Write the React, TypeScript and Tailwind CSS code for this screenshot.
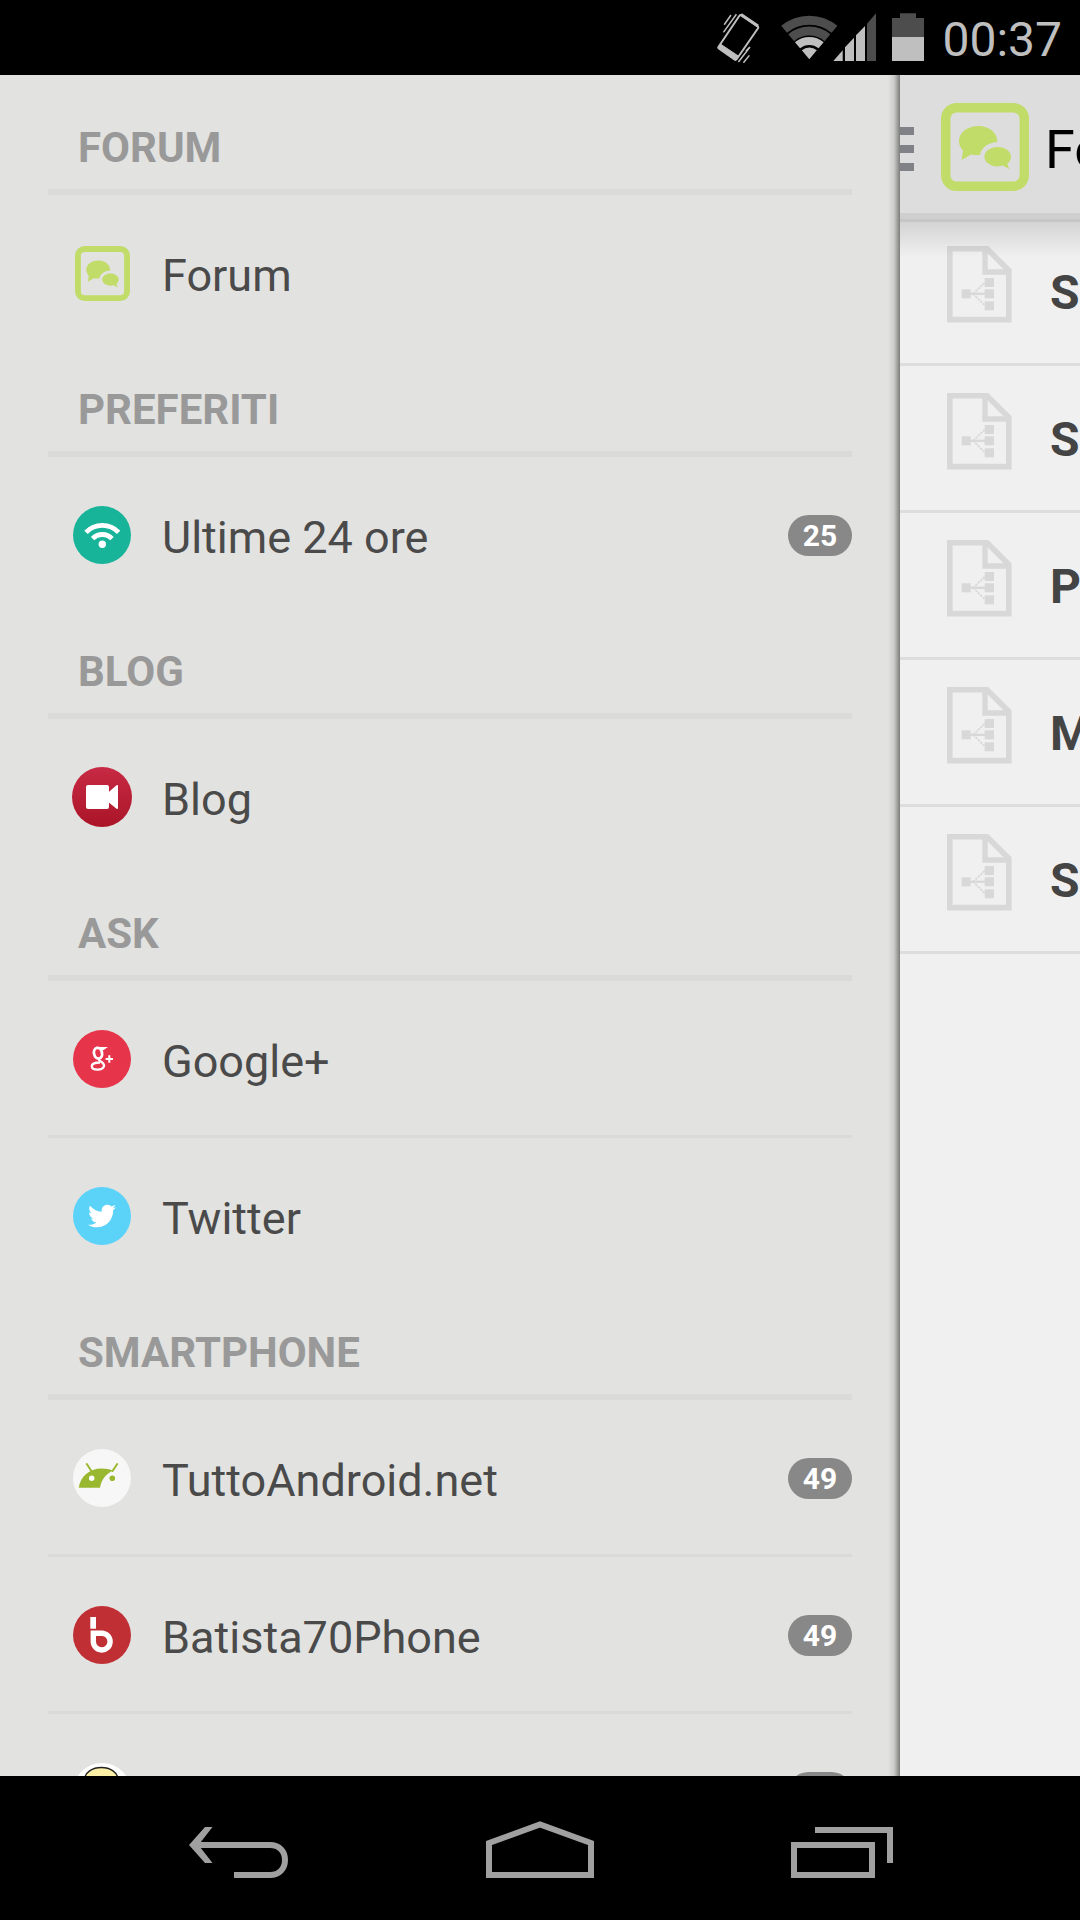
import React from 'react';
import { FaTwitter } from 'react-icons/fa';

type Item = {
    label: string;
    icon: React.ReactNode;
    count?: number;
};

type Section = {
    title: string;
    items: Item[];
};

const IconForum = ({ className }: { className: string }) => (
    <svg viewBox="0 0 88 88" className={className} aria-hidden="true">
        <rect x="4.7" y="4.7" width="78.6" height="78.6" rx="11" fill="none" stroke="#c1dc68" strokeWidth="9.4" />
        <path
            d="M37.5 23C48 23 56.3 29.5 56.3 38.5V39C47 39.5 40 45 39 52C35 52.3 32 52 30 51.5L20.7 57L22 47.5C19.5 45 18 41.5 18 37.7C18 29.5 26.5 23 37.5 23Z"
            fill="#c1dc68"
        />
        <path
            d="M56.7 44C64 44 70 48.3 70 53.7C70 56.5 68.6 59 66.3 60.7L68.3 66.3L62 62.6C60.4 63.1 58.6 63.4 56.7 63.4C49.4 63.4 43.4 59 43.4 53.7C43.4 48.3 49.4 44 56.7 44Z"
            fill="#c1dc68"
        />
    </svg>
);

const IconFeed = () => (
    <svg viewBox="0 0 60 60" className="size-[60px]" aria-hidden="true">
        <circle cx="30" cy="30" r="29" fill="#17b499" />
        <circle cx="30.3" cy="39.3" r="3.7" fill="#fff" />
        <g fill="none" stroke="#fff" strokeWidth="4.8">
            <path d="M20.6 33.6A13.5 13.5 0 0 1 40 33.6" />
            <path d="M14 27.4A22.5 22.5 0 0 1 46.6 27.4" />
        </g>
    </svg>
);

const IconVideo = () => (
    <svg viewBox="0 0 60 60" className="size-[60px]" aria-hidden="true">
        <defs>
            <linearGradient id="video-bg" x1="0" y1="0" x2="0" y2="1">
                <stop offset="0" stopColor="#c72a44" />
                <stop offset="1" stopColor="#ab1528" />
            </linearGradient>
        </defs>
        <circle cx="30" cy="30" r="30" fill="url(#video-bg)" />
        <rect x="14" y="18" width="23" height="24" rx="2" fill="#fff" />
        <path d="M36.5 25.3L44.5 18.3Q46 17.6 46 19V41Q46 42.4 44.5 41.7L36.5 35.3Z" fill="#fff" />
    </svg>
);

const IconGooglePlus = () => (
    <svg viewBox="0 0 60 60" className="size-[60px]" aria-hidden="true">
        <circle cx="30" cy="30" r="29" fill="#e6344b" />
        <g fill="none" stroke="#fff">
            <ellipse cx="26" cy="24.2" rx="4" ry="5.4" strokeWidth="2.8" transform="rotate(-12 26 24.2)" />
            <path d="M25 18.8H33.2L31 20.4H28.4" strokeWidth="1.8" />
            <path d="M27.6 29.4C25.2 31 28.6 32 30.6 33.8C33.6 36.6 31.6 40.6 25.8 40.6C22 40.6 19.8 39 19.8 37.2C19.8 34.6 23 33.5 28 33.5" strokeWidth="2.3" />
            <path d="M33.6 30H41M37.3 26.3V33.7" strokeWidth="2" />
        </g>
    </svg>
);

const IconTwitter = () => (
    <span className="flex size-[58px] items-center justify-center rounded-full bg-[#5bd3f8]">
        <FaTwitter className="size-7 text-white" aria-hidden="true" />
    </span>
);

const IconTuttoAndroid = () => (
    <svg viewBox="0 0 60 60" className="size-[60px]" aria-hidden="true">
        <circle cx="30" cy="30" r="29" fill="#f7f7f7" />
        <path d="M6.7 39.8C8.5 28.5 17 20.4 29.7 20.4C34 20.4 38 21.2 41 22.6C33.5 26.5 29.5 31.5 28 39.8Z" fill="#9ab82f" />
        <path d="M14.8 16L20 24M45.2 16L40.5 23" stroke="#9ab82f" strokeWidth="2" strokeLinecap="round" />
        <circle cx="19.7" cy="30.3" r="2.7" fill="#fff" />
        <circle cx="40.3" cy="30.3" r="2.8" fill="#9ab82f" />
    </svg>
);

const IconBatista = () => (
    <svg viewBox="0 0 60 60" className="size-[60px]" aria-hidden="true">
        <circle cx="30" cy="30" r="29" fill="#c02f33" />
        <rect x="18.3" y="12" width="5.7" height="11.7" fill="#fff" />
        <path d="M21.3 28.2H30.4A8.4 8.4 0 1 1 21.3 36.6Z" fill="none" stroke="#fff" strokeWidth="5.4" />
    </svg>
);

const IconMister = () => (
    <svg viewBox="0 0 60 60" className="size-[60px]" aria-hidden="true">
        <circle cx="30" cy="30" r="29" fill="#fff" />
        <ellipse cx="29.3" cy="17" rx="16.5" ry="11.5" fill="#fbf0a6" stroke="#222" strokeWidth="1.4" />
    </svg>
);

const IconTopic = () => (
    <svg viewBox="0 0 65 77" className="h-[77px] w-[65px] shrink-0" fill="none" stroke="#d8d8d8" aria-hidden="true">
        <path d="M2.8 2.8H40L61.8 24.5V73.6H2.8Z" strokeWidth="5.6" />
        <path d="M38 3V26H62" strokeWidth="5.4" />
        <path d="M23 47.8H38" strokeWidth="2.4" />
        <path d="M26 47.8L38 36.5M26 47.8L38 59.5" strokeWidth="1.8" strokeDasharray="2.4 1" />
        <g fill="#d8d8d8" stroke="none">
            <rect x="14.7" y="43.3" width="9" height="9" />
            <rect x="37.7" y="32" width="9.3" height="9" />
            <rect x="37.7" y="43.3" width="9.3" height="9" />
            <rect x="37.7" y="55.3" width="9.3" height="9" />
        </g>
    </svg>
);

const sections: Section[] = [
    {
        title: 'FORUM',
        items: [{ label: 'Forum', icon: <IconForum className="size-[55px]" /> }],
    },
    {
        title: 'PREFERITI',
        items: [{ label: 'Ultime 24 ore', icon: <IconFeed />, count: 25 }],
    },
    {
        title: 'BLOG',
        items: [{ label: 'Blog', icon: <IconVideo /> }],
    },
    {
        title: 'ASK',
        items: [
            { label: 'Google+', icon: <IconGooglePlus /> },
            { label: 'Twitter', icon: <IconTwitter /> },
        ],
    },
    {
        title: 'SMARTPHONE',
        items: [
            { label: 'TuttoAndroid.net', icon: <IconTuttoAndroid />, count: 49 },
            { label: 'Batista70Phone', icon: <IconBatista />, count: 49 },
            { label: 'Mister Gadget', icon: <IconMister />, count: 49 },
        ],
    },
];

const topics = ['S', 'S', 'P', 'M', 'S'];

const StatusBar = () => (
    <header className="flex h-[75px] shrink-0 items-center justify-end bg-black pr-[18px] text-[#bfbfbf]">
        {/* Vibrate mode */}
        <svg viewBox="0 0 43 50" className="h-[50px] w-[43px]" fill="none" stroke="currentColor" aria-hidden="true">
            <path d="M24 2.2L40.6 13.4Q41.6 14.2 41 15.2L19.6 46.2Q18.8 47.2 17.8 46.6L1.8 35.4Q1 34.8 1.6 33.8L22.4 2.8Q23.2 1.8 24 2.2Z" strokeWidth="2" />
            <path d="M24 1.6L41 13" strokeWidth="3" />
            <path d="M3.4 31L21.6 43.2L18.6 47.4L1 35Z" fill="currentColor" strokeWidth="1" />
            <path d="M7.2 11.8L14 2M6.4 19.4L19.4 1.2M33 34L21.4 49M32.4 42.4L26.4 49.8M32.6 34.2L29 38" strokeWidth="1.5" />
        </svg>

        {/* Wifi and signal strength */}
        <svg viewBox="0 0 96 50" className="ml-5 h-[50px] w-[96px]" fill="none" aria-hidden="true">
            <path d="M4.1 16.3A39.2 39.2 0 0 1 54.5 16.3" stroke="#4d4d4d" strokeWidth="9" />
            <path d="M11.2 24.7A28.2 28.2 0 0 1 47.4 24.7" stroke="#4d4d4d" strokeWidth="9" />
            <path d="M17.5 32.3A18.3 18.3 0 0 1 41.1 32.3" stroke="#bfbfbf" strokeWidth="8" />
            <path d="M29.3 46.3L21.8 37.3A11.7 11.7 0 0 1 36.8 37.3Z" fill="#bfbfbf" />
            <path d="M53.3 48H62.7V37.3ZM65 48H74V24.7L65 34.3ZM76 48H85V13L76 22.3Z" fill="#bfbfbf" />
            <path d="M87 48H96V0.3L87 10.7Z" fill="#4d4d4d" />
        </svg>

        {/* Battery */}
        <svg viewBox="0 0 32 50" className="ml-4 h-[50px] w-8" aria-hidden="true">
            <path d="M0 24V5H8V0.3H24V5H32V24Z" fill="#4d4d4d" />
            <rect y="24" width="32" height="24" fill="#bfbfbf" />
        </svg>

        <time className="ml-[18px] pt-1 text-[48px] leading-none">00:37</time>
    </header>
);

const DrawerItem = ({ label, icon, count }: Item) => (
    <li className="border-b-[3px] border-[#dadad8] last:border-b-0">
        <a href="#" className="flex h-[154px] items-center pt-[2px] pl-6">
            <span className="flex w-[60px] shrink-0 justify-center">{icon}</span>
            <span className="ml-[30px] flex-1 truncate pt-[6px] text-[45px] leading-[60px] text-[#4a4a4a]">{label}</span>
            {count !== undefined && (
                <span className="flex h-[41px] w-16 items-center justify-center rounded-full bg-[#888888] pt-[2px] text-[30px] leading-none font-bold text-white">
                    {count}
                </span>
            )}
        </a>
    </li>
);

const Drawer = () => (
    <nav className="relative w-5/6 shrink-0 overflow-hidden bg-[#e2e2e0] px-12 pt-3">
        {sections.map((section) => (
            <section key={section.title}>
                <h2 className="flex h-[108px] items-center border-b-6 border-[#dadad8] pt-5 pl-[30px] text-[42px] leading-none font-bold text-[#999999]">
                    {section.title}
                </h2>
                <ul>
                    {section.items.map((item) => (
                        <DrawerItem key={item.label} {...item} />
                    ))}
                </ul>
            </section>
        ))}
        {/* Shadow cast by the content pane */}
        <div className="absolute inset-y-0 right-0 w-3 bg-gradient-to-r from-transparent via-black/10 to-black/45" />
    </nav>
);

const Content = () => (
    <main className="min-w-0 flex-1 overflow-hidden bg-[#f0f0f0]">
        <div className="relative flex h-36 items-center border-b-6 border-[#cfcfcf] bg-[#dddddd]">
            <button type="button" aria-label="Menu" className="flex w-[14px] shrink-0 flex-col gap-[10px] pt-[10px]">
                <span className="h-2 bg-[#808288]" />
                <span className="h-2 bg-[#808288]" />
                <span className="h-2 bg-[#808288]" />
            </button>
            <IconForum className="mt-[6px] ml-[27px] size-[88px] shrink-0" />
            <h1 className="ml-4 pt-3 text-[54px] leading-none whitespace-nowrap text-black">Forum</h1>
            {/* Bottom edge and drop shadow of the action bar */}
            <div className="absolute inset-x-0 top-36 h-[38px] border-t-3 border-[#c6c6c6] bg-gradient-to-b from-black/12 to-transparent" />
        </div>
        <ul>
            {topics.map((topic, i) => (
                <li key={i} className="border-b-3 border-[#dddddd]">
                    <a href="#" className="flex h-36 items-center pl-[47px]">
                        <span className="pb-[14px]">
                            <IconTopic />
                        </span>
                        <span className="ml-[38px] pt-1 text-[48px] leading-none font-bold text-[#444444]">{topic}</span>
                    </a>
                </li>
            ))}
        </ul>
    </main>
);

const NavigationBar = () => (
    <footer className="flex h-36 shrink-0 items-center justify-between bg-black pt-[2px] pr-[187px] pl-[189px] text-[#a0a0a0]">
        <button type="button" aria-label="Back">
            <svg viewBox="0 0 99 57" className="h-[57px] w-[99px]" fill="none" stroke="currentColor">
                <path d="M8 24H81C90 24 96 30 96 39S90 54 81 54H45" strokeWidth="6" />
                <path d="M0 24L16 6H23.5L9.5 24L23.5 42H16Z" fill="currentColor" stroke="none" />
            </svg>
        </button>
        <button type="button" aria-label="Home">
            <svg viewBox="0 0 108 57" className="h-[57px] w-[108px]" fill="none" stroke="currentColor">
                <path d="M3 54V22L54 3.4L105 22V54Z" strokeWidth="6" />
            </svg>
        </button>
        <button type="button" aria-label="Recent apps">
            <svg viewBox="0 0 102 57" className="h-[57px] w-[102px]" fill="none" stroke="currentColor">
                <rect x="3" y="24" width="78" height="30" strokeWidth="6" />
                <path d="M24 9H99V42" strokeWidth="6" />
            </svg>
        </button>
    </footer>
);

const App = () => {
    return (
        <div className="flex h-screen flex-col overflow-hidden bg-black font-['Roboto',sans-serif]">
            <StatusBar />
            <div className="flex min-h-0 flex-1">
                <Drawer />
                <Content />
            </div>
            <NavigationBar />
        </div>
    );
};

export default App;
